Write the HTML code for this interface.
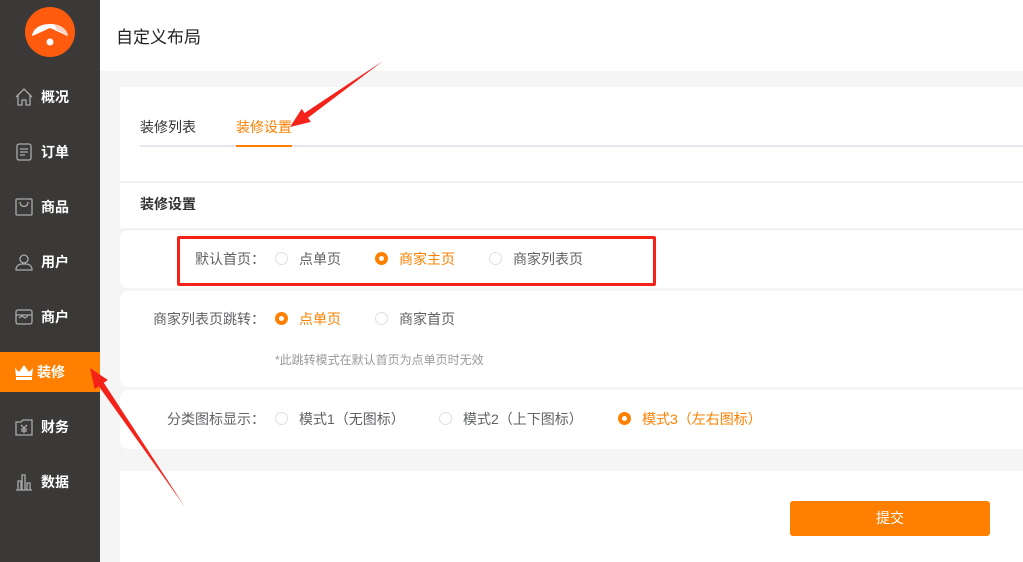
<!DOCTYPE html>
<html><head><meta charset="utf-8"><style>
*{margin:0;padding:0;box-sizing:border-box}
body{width:1023px;height:562px;overflow:hidden;background:#f5f5f5;font-family:"Liberation Sans","Noto Sans CJK SC",sans-serif;position:relative}
.a{position:absolute}
.side{left:0;top:0;width:100px;height:562px;background:#3a3938}
.mi{position:absolute;left:0;width:100px;height:40px;color:#fff;font-size:14px;font-weight:bold;line-height:40px}
.mi span{position:absolute;left:41px}
.mi svg{position:absolute;left:15px;top:11px}
.r{position:absolute;width:13px;height:13px;border:1px solid #dcdfe6;border-radius:50%;background:#fff}
.r.on{border:4px solid #ff8000;background:#fff}
.t{position:absolute;font-size:14px;color:#606266;white-space:nowrap;line-height:20px}
.o{color:#ff8000}
</style></head><body>
<div class="a" style="left:100px;top:0;width:923px;height:71px;background:#fff"></div>
<div class="a" style="left:116px;top:23px;font-size:17px;color:#222;">自定义布局</div>
<div class="a" style="left:120px;top:87px;width:903px;height:94px;background:#fff"></div>
<div class="a" style="left:140px;top:145px;width:883px;height:2px;background:#e4e7ed"></div>
<div class="a" style="left:236px;top:145px;width:56px;height:2px;background:#ff8000"></div>
<div class="t" style="left:140px;top:117px;color:#303133">装修列表</div>
<div class="t o" style="left:236px;top:117px">装修设置</div>
<div class="a" style="left:120px;top:182px;width:903px;height:46px;background:#fff;border-top:1px solid #ececec"></div>
<div class="t" style="left:140px;top:194px;color:#303133;font-weight:bold">装修设置</div>
<div class="a" style="left:120px;top:229px;width:903px;height:59px;background:#fff;border-top:1px solid #ececec;border-radius:8px 0 0 8px"></div>
<div class="a" style="left:120px;top:291px;width:903px;height:96px;background:#fff;border-radius:8px 0 0 8px"></div>
<div class="a" style="left:120px;top:390px;width:903px;height:59px;background:#fff;border-radius:8px 0 0 8px"></div>
<div class="a" style="left:120px;top:471px;width:903px;height:91px;background:#fff"></div>
<div class="a" style="left:177px;top:236px;width:479px;height:50px;border:3px solid #f5221a;border-radius:2px"></div>
<div class="t" style="left:195px;top:249px">默认首页：</div>
<div class="r" style="left:275px;top:252px"></div><div class="t" style="left:299px;top:249px">点单页</div>
<div class="r on" style="left:375px;top:252px"></div><div class="t o" style="left:399px;top:249px">商家主页</div>
<div class="r" style="left:489px;top:252px"></div><div class="t" style="left:513px;top:249px">商家列表页</div>
<div class="t" style="left:153px;top:309px">商家列表页跳转：</div>
<div class="r on" style="left:275px;top:312px"></div><div class="t o" style="left:299px;top:309px">点单页</div>
<div class="r" style="left:375px;top:312px"></div><div class="t" style="left:399px;top:309px">商家首页</div>
<div class="t" style="left:275px;top:350px;font-size:12px;color:#999">*此跳转模式在默认首页为点单页时无效</div>
<div class="t" style="left:167px;top:409px">分类图标显示：</div>
<div class="r" style="left:275px;top:412px"></div><div class="t" style="left:299px;top:409px">模式1（无图标）</div>
<div class="r" style="left:439px;top:412px"></div><div class="t" style="left:463px;top:409px">模式2（上下图标）</div>
<div class="r on" style="left:618px;top:412px"></div><div class="t o" style="left:642px;top:409px">模式3（左右图标）</div>
<div class="a" style="left:790px;top:501px;width:200px;height:35px;background:#ff8000;border-radius:3px;color:#fff;font-size:14px;text-align:center;line-height:35px">提交</div>

<div class="a side">
<svg class="a" style="left:25px;top:7px" width="50" height="50" viewBox="0 0 50 50"><circle cx="25" cy="25" r="25" fill="#fe5b0e"/><path d="M7 29 C8 21 16 17 25 17 C34 17 42 21 43 29 C38 27 32 24 25 21 C18 24 12 27 7 29Z" fill="#fff"/><path d="M30 17.5 C37 19 42 23 42.6 28 C38 26 34 24 31 22Z" fill="#fcd3c3"/><circle cx="25" cy="35" r="3.5" fill="#fff"/></svg>
<div class="mi" style="top:77px"><svg width="18" height="18" viewBox="0 0 18 18" fill="none" stroke="#aaa" stroke-width="1.3"><path d="M1 9 L9 1 L17 9 M3 7 V17 H7 V12 H11 V17 H15 V7"/></svg><span>概况</span></div>
<div class="mi" style="top:132px"><svg width="18" height="18" viewBox="0 0 18 18" fill="none" stroke="#aaa" stroke-width="1.3"><rect x="2" y="1" width="14" height="16" rx="2"/><path d="M5 6H13M5 9H13M5 12H10"/></svg><span>订单</span></div>
<div class="mi" style="top:187px"><svg width="18" height="18" viewBox="0 0 18 18" fill="none" stroke="#aaa" stroke-width="1.3"><rect x="1" y="1" width="16" height="16" rx="1"/><path d="M5 4 C5 10 13 10 13 4"/></svg><span>商品</span></div>
<div class="mi" style="top:242px"><svg width="18" height="18" viewBox="0 0 18 18" fill="none" stroke="#aaa" stroke-width="1.3"><circle cx="9" cy="6" r="4"/><path d="M1 17 C1 12 5 11 7 11 H11 C13 11 17 12 17 17Z"/></svg><span>用户</span></div>
<div class="mi" style="top:297px"><svg width="18" height="18" viewBox="0 0 18 18" fill="none" stroke="#aaa" stroke-width="1.3"><rect x="1" y="2" width="16" height="14" rx="2"/><path d="M1 7H17M4 10 L7 8 L10 10 L13 8"/></svg><span>商户</span></div>
<div class="mi" style="top:352px;background:#ff8000"><svg width="20" height="18" viewBox="0 0 20 18" style="left:14px"><path d="M1 5 L5 9 L10 2 L15 9 L19 5 L18 13 H2Z" fill="#fff"/><rect x="2" y="14" width="16" height="3" fill="#fff"/></svg><span style="left:37px">装修</span></div>
<div class="mi" style="top:407px"><svg width="18" height="18" viewBox="0 0 18 18" fill="none" stroke="#aaa" stroke-width="1.3"><path d="M1 4 H6 L8 2 H17 V17 H1Z"/><path d="M6 7 L9 10 L12 7 M9 10 V15 M6 11H12M6 13H12"/></svg><span>财务</span></div>
<div class="mi" style="top:462px"><svg width="18" height="18" viewBox="0 0 18 18" fill="none" stroke="#aaa" stroke-width="1.3"><path d="M1 17H17M3 17V8H6V17M7 17V2H10V17M12 17V10H15V17"/></svg><span>数据</span></div>
</div>

<svg class="a" style="left:0;top:0" width="1023" height="562">
<polygon points="383,61 308,117.8 310.9,121.9 290,127 301.7,108.9 304.6,113" fill="#f5221a"/>
<polygon points="185,507 103.8,382.8 107.9,380 90,368 94.7,389 98.8,386.2" fill="#f5221a"/>
</svg>
</body></html>
